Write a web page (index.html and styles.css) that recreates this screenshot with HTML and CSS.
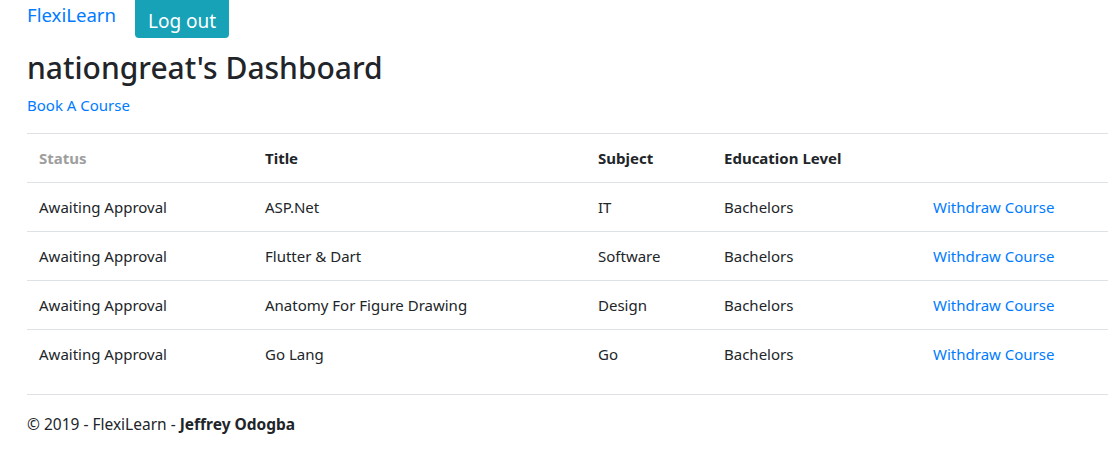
FILE: index.html
```html
<!DOCTYPE html>
<html lang="en">
<head>
<meta charset="utf-8">
<title>FlexiLearn</title>
<link rel="stylesheet" href="styles.css">
</head>
<body>
<div class="page">
  <nav class="nav">
    <a class="brand" href="#">FlexiLearn</a>
    <button class="btn-logout" type="button">Log out</button>
  </nav>
  <main class="main">
    <h2 class="title">nationgreat's Dashboard</h2>
    <a class="book-link" href="#">Book A Course</a>
    <table class="table">
      <thead>
        <tr>
          <th class="col-status muted">Status</th>
          <th class="col-title">Title</th>
          <th class="col-subject">Subject</th>
          <th class="col-level">Education Level</th>
          <th class="col-action"></th>
        </tr>
      </thead>
      <tbody>
        <tr>
          <td>Awaiting Approval</td>
          <td>ASP.Net</td>
          <td>IT</td>
          <td>Bachelors</td>
          <td><a href="#">Withdraw Course</a></td>
        </tr>
        <tr>
          <td>Awaiting Approval</td>
          <td>Flutter &amp; Dart</td>
          <td>Software</td>
          <td>Bachelors</td>
          <td><a href="#">Withdraw Course</a></td>
        </tr>
        <tr>
          <td>Awaiting Approval</td>
          <td>Anatomy For Figure Drawing</td>
          <td>Design</td>
          <td>Bachelors</td>
          <td><a href="#">Withdraw Course</a></td>
        </tr>
        <tr>
          <td>Awaiting Approval</td>
          <td>Go Lang</td>
          <td>Go</td>
          <td>Bachelors</td>
          <td><a href="#">Withdraw Course</a></td>
        </tr>
      </tbody>
    </table>
  </main>
  <footer class="footer">
    &copy; 2019 - FlexiLearn - <strong>Jeffrey Odogba</strong>
  </footer>
</div>
</body>
</html>
```
FILE: styles.css
```css
html, body {
  margin: 0;
  padding: 0;
  background: #fff;
  overflow: hidden;
}
body {
  font-family: "Noto Sans", "Open Sans", sans-serif;
  font-size: 15px;
  line-height: 24px;
  color: #212529;
}
a {
  color: #007bff;
  text-decoration: none;
}
.page {
  padding-left: 27px;
  width: 1160px;
}
.nav {
  display: flex;
  align-items: flex-start;
  height: 38px;
}
.brand {
  font-size: 18.6px;
  line-height: 30px;
  width: 108px;
}
.btn-logout {
  font-family: inherit;
  font-size: 19px;
  line-height: 24px;
  height: 38px;
  padding: 3px 13px 0;
  background: #17a2b8;
  color: #fff;
  border: none;
  border-radius: 0 0 4px 4px;
}
.main {
  display: flex;
  flex-direction: column;
  align-items: flex-start;
}
.title {
  font-size: 30px;
  font-weight: 500;
  line-height: 38px;
  margin: 11px 0 6px;
}
.book-link {
  margin-bottom: 16px;
}
.table {
  width: 100%;
  border-collapse: collapse;
  margin-bottom: 16px;
}
.table th, .table td {
  text-align: left;
  padding: 12px;
  border-top: 1px solid #dee2e6;
  vertical-align: top;
}
.table th {
  font-weight: 700;
}
.table thead th {
  border-bottom: 1px solid #dee2e6;
}
.table tbody tr:first-child td {
  border-top: none;
}
.col-status { width: 202px; }
.col-title { width: 309px; }
.col-subject { width: 102px; }
.col-level { width: 185px; }
.muted { color: #9e9e9e; }
.footer {
  border-top: 1px solid #dee2e6;
  padding-top: 17px;
  font-size: 15.5px;
  line-height: 24px;
}
.footer strong { font-weight: 700; }
```
